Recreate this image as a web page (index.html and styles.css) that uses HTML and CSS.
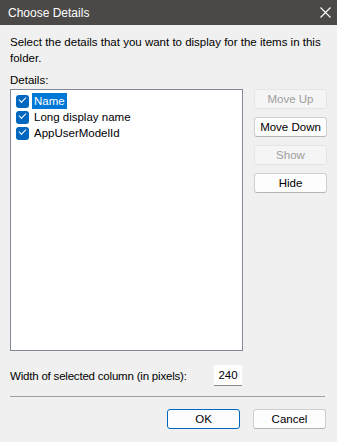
FILE: index.html
```html
<!DOCTYPE html>
<html>

<head>
	<meta charset="utf-8">
	<title>Choose Details</title>
	<meta name="viewport" content="width=device-width, initial-scale=1">
	<link rel="stylesheet" href="styles.css">
</head>

<body>
	<div class='dialog'>
		<header class='titlebar'>
			<span class='titlebar__text'>Choose Details</span>
			<button class='titlebar__close' aria-label='Close'>
				<svg width='11' height='11' viewBox='0 0 11 11'>
					<path d='M0.5 0.5 L10.5 10.5 M10.5 0.5 L0.5 10.5' stroke='#fff' stroke-width='1.1' fill='none' />
				</svg>
			</button>
		</header>

		<main class='content'>
			<p class='desc'>Select the details that you want to display for the items in this folder.</p>
			<p class='label'>Details:</p>

			<div class='picker'>
				<ul class='list'>
					<li class='item'>
						<span class='check'></span>
						<span class='item__text item__text--selected'>Name</span>
					</li>
					<li class='item'>
						<span class='check'></span>
						<span class='item__text'>Long display name</span>
					</li>
					<li class='item'>
						<span class='check'></span>
						<span class='item__text'>AppUserModelId</span>
					</li>
				</ul>
				<div class='side'>
					<button class='btn' disabled>Move Up</button>
					<button class='btn'>Move Down</button>
					<button class='btn' disabled>Show</button>
					<button class='btn'>Hide</button>
				</div>
			</div>

			<div class='width-row'>
				<span class='width-row__label'>Width of selected column (in pixels):</span>
				<span class='width-row__input'>240</span>
			</div>

			<hr class='sep'>

			<div class='actions'>
				<button class='btn btn--default'>OK</button>
				<button class='btn'>Cancel</button>
			</div>
		</main>
	</div>
</body>

</html>
```

FILE: styles.css
```css
/* dialog shell */

* {
	box-sizing: border-box;
}

html,
body {
	margin: 0;
	padding: 0;
	font-family: 'Liberation Sans', Arial, sans-serif;
	font-size: 11.5px;
	color: #000;
	background: #f0f0f0;
}

p,
ul {
	margin: 0;
	padding: 0;
}

.dialog {
	width: 337px;
	height: 442px;
	background: #f0f0f0;
}

/* title bar */

.titlebar {
	display: flex;
	align-items: center;
	justify-content: space-between;
	height: 25px;
	padding: 0 6px 0 8px;
	background: #4a4947;
	color: #fff;
}

.titlebar__text {
	font-size: 12px;
}

.titlebar__close {
	display: flex;
	padding: 0;
	margin: 0;
	border: 0;
	background: none;
}

/* body */

.content {
	padding: 9px 10px 0 10px;
}

.desc {
	line-height: 16px;
}

.label {
	margin-top: 6px;
	line-height: 16px;
}

.picker {
	display: flex;
	gap: 11px;
	margin-top: 1px;
}

.list {
	list-style: none;
	width: 233px;
	height: 262px;
	padding: 3px 5px;
	background: #fff;
	border: 1px solid #82879a;
}

.item {
	display: flex;
	align-items: center;
	height: 16px;
	gap: 3px;
}

.check {
	position: relative;
	width: 13px;
	height: 13px;
	border-radius: 3px;
	background: #0067c0;
}

.check::after {
	content: '';
	position: absolute;
	left: 3px;
	top: 2px;
	width: 6px;
	height: 3px;
	border-left: 1.2px solid #fff;
	border-bottom: 1.2px solid #fff;
	transform: rotate(-45deg);
}

.item__text {
	padding: 0 2px;
	line-height: 16px;
}

.item__text--selected {
	background: #0078d7;
	color: #fff;
}

.side {
	display: flex;
	flex-direction: column;
	gap: 8px;
}

/* buttons */

.btn {
	width: 73px;
	height: 20px;
	padding: 0;
	font: inherit;
	color: #000;
	background: #fdfdfd;
	border: 1px solid #cfcfcf;
	border-bottom-color: #b5b5b5;
	border-radius: 3px;
}

.btn:disabled {
	color: #9d9d9d;
	background: #f5f5f5;
	border-color: #e5e5e5;
}

.btn--default {
	border: 1px solid #0067c0;
}

/* bottom */

.width-row {
	display: flex;
	align-items: center;
	justify-content: space-between;
	margin-top: 14px;
	padding-right: 85px;
}

.width-row__label {
	letter-spacing: -0.2px;
}

.width-row__input {
	width: 28px;
	height: 21px;
	line-height: 20px;
	text-align: center;
	background: #fff;
	border-bottom: 1px solid #8a8a8a;
}

.sep {
	margin: 10px 2px 0 0;
	border: 0;
	border-top: 1px solid #a0a0a0;
}

.actions {
	display: flex;
	justify-content: flex-end;
	gap: 13px;
	margin-top: 12px;
	padding-right: 1px;
}
```
